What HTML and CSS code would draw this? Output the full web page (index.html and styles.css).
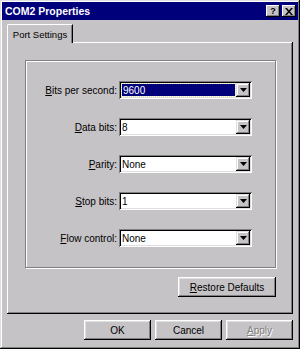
FILE: index.html
```html
<!DOCTYPE html>
<html lang="en">
<head>
    <meta charset="UTF-8">
    <meta name="viewport" content="width=device-width, initial-scale=1.0">
    <title>COM2 Properties</title>
    <link rel="stylesheet" href="styles.css">
</head>
<body>
    <div class="window">
        <div class="titlebar">
            <span class="title">COM2 Properties</span>
            <span class="tb-btn help">?</span>
            <span class="tb-btn close">
                <svg width="8" height="7" viewBox="0 0 8 7"><path d="M0 0h2l2 2.5L6 0h2L5 3.5 8 7H6L4 4.5 2 7H0l3-3.5z" fill="#000"/></svg>
            </span>
        </div>
        <div class="content">
            <div class="tabs">
                <div class="tab active">Port Settings</div>
            </div>
            <div class="panel">
                <div class="group">
                    <div class="row">
                        <label class="label"><u>B</u>its per second:</label>
                        <div class="combo focused">
                            <div class="value"><span class="sel">9600</span></div>
                            <div class="drop"><svg width="7" height="4" viewBox="0 0 7 4"><path d="M0 0h7L3.5 4z" fill="#000"/></svg></div>
                        </div>
                    </div>
                    <div class="row">
                        <label class="label"><u>D</u>ata bits:</label>
                        <div class="combo">
                            <div class="value">8</div>
                            <div class="drop"><svg width="7" height="4" viewBox="0 0 7 4"><path d="M0 0h7L3.5 4z" fill="#000"/></svg></div>
                        </div>
                    </div>
                    <div class="row">
                        <label class="label"><u>P</u>arity:</label>
                        <div class="combo">
                            <div class="value">None</div>
                            <div class="drop"><svg width="7" height="4" viewBox="0 0 7 4"><path d="M0 0h7L3.5 4z" fill="#000"/></svg></div>
                        </div>
                    </div>
                    <div class="row">
                        <label class="label"><u>S</u>top bits:</label>
                        <div class="combo">
                            <div class="value">1</div>
                            <div class="drop"><svg width="7" height="4" viewBox="0 0 7 4"><path d="M0 0h7L3.5 4z" fill="#000"/></svg></div>
                        </div>
                    </div>
                    <div class="row">
                        <label class="label"><u>F</u>low control:</label>
                        <div class="combo">
                            <div class="value">None</div>
                            <div class="drop"><svg width="7" height="4" viewBox="0 0 7 4"><path d="M0 0h7L3.5 4z" fill="#000"/></svg></div>
                        </div>
                    </div>
                </div>
                <div class="restore-row">
                    <button class="btn restore"><u>R</u>estore Defaults</button>
                </div>
            </div>
            <div class="buttons">
                <button class="btn">OK</button>
                <button class="btn">Cancel</button>
                <button class="btn disabled"><u>A</u>pply</button>
            </div>
        </div>
    </div>
</body>
</html>
```

FILE: styles.css
```css
body {
    margin: 0;
    padding: 0;
    font-family: 'Liberation Sans', Arial, sans-serif;
    font-size: 10px;
    color: #000;
    background: #c6c3c6;
}

.window {
    width: 300px;
    height: 349px;
    box-sizing: border-box;
    padding: 2px;
    background: #c6c3c6;
    box-shadow: inset -1px -1px #000, inset 1px 1px #dfdfdf, inset -2px -2px #808080, inset 2px 2px #fff;
}

.titlebar {
    height: 18px;
    background: #00007b;
    display: flex;
    align-items: center;
    padding: 0 2px 0 3px;
    color: #fff;
    font-weight: bold;
    font-size: 10.5px;
}

.title {
    flex: 1;
}

.tb-btn {
    width: 14px;
    height: 12px;
    box-sizing: border-box;
    background: #c6c3c6;
    box-shadow: inset -1px -1px #000, inset 1px 1px #fff, inset -2px -2px #808080;
    display: flex;
    align-items: center;
    justify-content: center;
    color: #000;
    font-size: 9px;
    font-weight: bold;
}

.help {
    margin-right: 2px;
}

.content {
    padding: 4px 5px 0 5px;
}

.tabs {
    display: flex;
    height: 18px;
    position: relative;
    z-index: 1;
}

.tab {
    width: 66px;
    height: 19px;
    box-sizing: border-box;
    background: #c6c3c6;
    border-top: 1px solid #fff;
    border-left: 1px solid #fff;
    border-right: 1px solid #000;
    border-top-left-radius: 2px;
    box-shadow: inset -1px 0 #808080;
    display: flex;
    align-items: center;
    justify-content: center;
    font-size: 9.5px;
}

.panel {
    height: 272px;
    box-sizing: border-box;
    padding: 18px 17px 0 18px;
    box-shadow: inset -1px -1px #000, inset 1px 1px #fff, inset -2px -2px #808080;
}

.group {
    height: 208px;
    box-sizing: border-box;
    border: 1px solid #808080;
    box-shadow: 1px 1px #fff, inset 1px 1px #fff;
    padding: 20px 0 0 0;
    display: flex;
    flex-direction: column;
    gap: 19px;
}

.row {
    display: flex;
    align-items: center;
    height: 18px;
}

.label {
    width: 91px;
    text-align: right;
    margin-right: 2px;
}

.combo {
    width: 133px;
    height: 18px;
    box-sizing: border-box;
    background: #fff;
    padding: 2px;
    display: flex;
    box-shadow: inset 1px 1px #808080, inset -1px -1px #fff, inset 2px 2px #000, inset -2px -2px #dfdfdf;
}

.value {
    flex: 1;
    display: flex;
    align-items: center;
    padding-left: 1px;
}

.focused .value {
    padding: 1px;
}

.sel {
    flex: 1;
    align-self: stretch;
    display: flex;
    align-items: center;
    background: #00007b;
    color: #fff;
    padding-left: 1px;
    outline: 1px dotted #e8e0a0;
}

.drop {
    width: 14px;
    box-sizing: border-box;
    background: #c6c3c6;
    box-shadow: inset -1px -1px #000, inset 1px 1px #dfdfdf, inset -2px -2px #808080, inset 2px 2px #fff;
    display: flex;
    align-items: center;
    justify-content: center;
}

.restore-row {
    display: flex;
    justify-content: flex-end;
    margin-top: 9px;
}

.btn {
    font-family: inherit;
    font-size: inherit;
    color: #000;
    background: #c6c3c6;
    border: none;
    margin: 0;
    padding: 0;
    width: 67px;
    height: 20px;
    box-shadow: inset -1px -1px #000, inset 1px 1px #fff, inset -2px -2px #808080, inset 2px 2px #dfdfdf;
}

.restore {
    width: 98px;
}

.buttons {
    display: flex;
    justify-content: flex-end;
    gap: 4px;
    margin-top: 6px;
}

.disabled {
    color: #808080;
    text-shadow: 1px 1px #fff;
}
```
